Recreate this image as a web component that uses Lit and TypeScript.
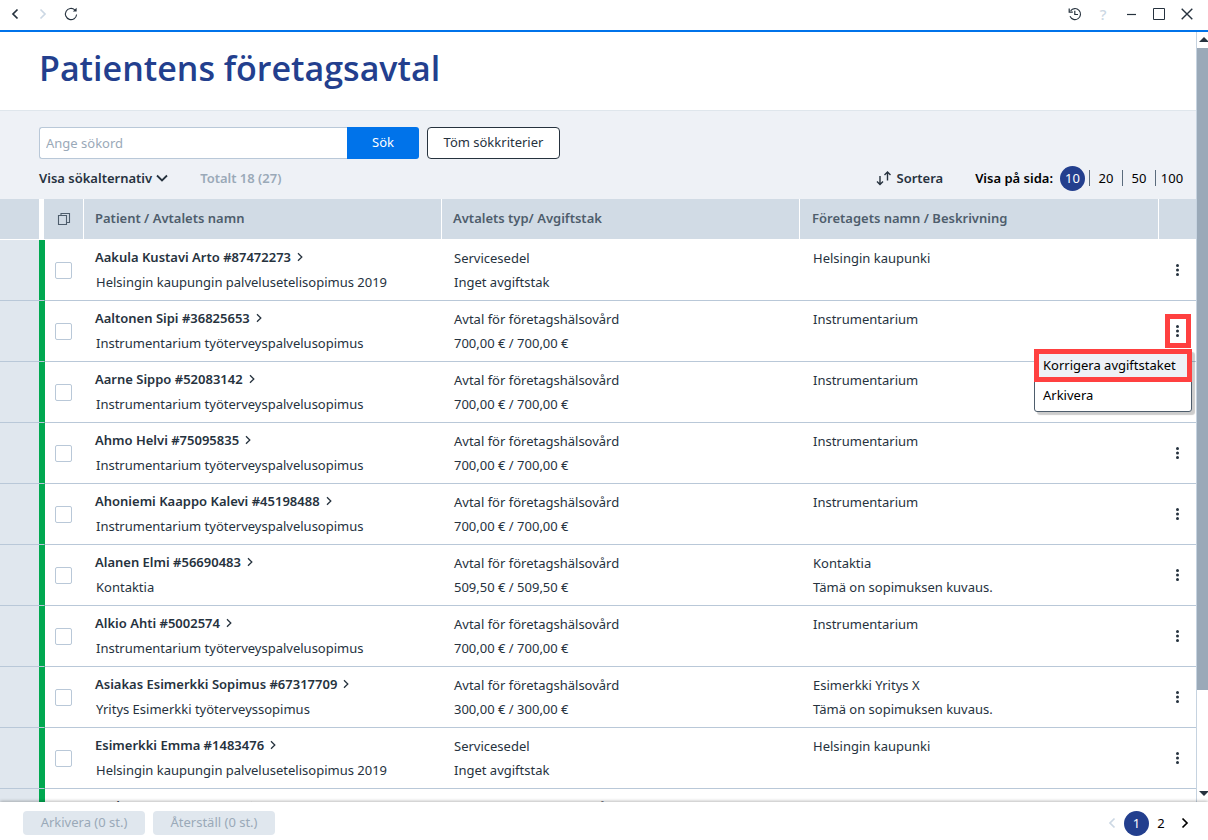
import { LitElement, html, css, svg, nothing } from "lit";
import { customElement } from "lit/decorators.js";

interface Agreement {
  patient: string;
  name: string;
  type: string;
  cap: string;
  company: string;
  description?: string;
  menuOpen?: boolean;
}

const OHC = "Avtal för företagshälsovård";
const INSTR = "Instrumentarium työterveyspalvelusopimus";
const HKI = "Helsingin kaupungin palvelusetelisopimus 2019";
const CAP = "700,00 € / 700,00 €";

const rows: Agreement[] = [
  { patient: "Aakula Kustavi Arto #87472273", name: HKI, type: "Servicesedel", cap: "Inget avgiftstak", company: "Helsingin kaupunki" },
  { patient: "Aaltonen Sipi #36825653", name: INSTR, type: OHC, cap: CAP, company: "Instrumentarium", menuOpen: true },
  { patient: "Aarne Sippo #52083142", name: INSTR, type: OHC, cap: CAP, company: "Instrumentarium" },
  { patient: "Ahmo Helvi #75095835", name: INSTR, type: OHC, cap: CAP, company: "Instrumentarium" },
  { patient: "Ahoniemi Kaappo Kalevi #45198488", name: INSTR, type: OHC, cap: CAP, company: "Instrumentarium" },
  { patient: "Alanen Elmi #56690483", name: "Kontaktia", type: OHC, cap: "509,50 € / 509,50 €", company: "Kontaktia", description: "Tämä on sopimuksen kuvaus." },
  { patient: "Alkio Ahti #5002574", name: INSTR, type: OHC, cap: CAP, company: "Instrumentarium" },
  { patient: "Asiakas Esimerkki Sopimus #67317709", name: "Yritys Esimerkki työterveyssopimus", type: OHC, cap: "300,00 € / 300,00 €", company: "Esimerkki Yritys X", description: "Tämä on sopimuksen kuvaus." },
  { patient: "Esimerkki Emma #1483476", name: HKI, type: "Servicesedel", cap: "Inget avgiftstak", company: "Helsingin kaupunki" },
  { patient: "Potinen Anna #9561935", name: "", type: OHC, cap: "", company: "" },
];

const icon = (w: number, h: number, body: unknown) => html`<svg
  width=${w} height=${h} viewBox="0 0 ${w} ${h}" fill="none" stroke="currentColor" aria-hidden="true">${body}</svg>`;

const backIcon = icon(8, 12, svg`<path d="M6.5 1.5 2 6l4.5 4.5" stroke-width="1.7"/>`);
const forwardIcon = icon(8, 12, svg`<path d="M1.5 1.5 6 6l-4.5 4.500" stroke-width="1.7"/>`);
const reloadIcon = icon(14, 14, svg`<path d="M10.8 2.9A5.6 5.6 0 1 0 12.6 7.5" stroke-width="1.1"/><path d="M8.8 4.4h3.800V.8z" fill="currentColor" stroke="none"/>`);
const historyIcon = icon(14, 14, svg`<path d="M2.6 3.800A5.500 5.500 0 1 1 2 9.300" stroke-width="1.1"/><path d="M1.200 1.600v3.600h3.600" stroke-width="1.2"/><path d="M6.800 3.800v3.700H10" stroke-width="1.2"/>`);
const minIcon = icon(12, 12, svg`<path d="M2 6.500h9" stroke-width="1.2"/>`);
const maxIcon = icon(12, 12, svg`<path d="M.5.5h11v11H.5z"/>`);
const closeIcon = icon(12, 12, svg`<path d="m.7.7 10.6 10.6M11.3.7.7 11.3" stroke-width="1.4"/>`);
const downIcon = icon(12, 8, svg`<path d="m1 1.5 5 5 5-5" stroke-width="1.8"/>`);
const sortIcon = icon(16, 16, svg`<path d="M4 6v8.500M1 11.500l3 3 3-3M11.500 10.500V2M8.500 5l3-3 3 3" stroke-width="1.4"/>`);
const copyIcon = icon(14, 14, svg`<path d="M1.500 3.500h8v9h-8zM4 3.500v-2h8.500v9h-3" stroke-width="1.1"/>`);
const smallChevron = icon(6, 10, svg`<path d="m1 1.3 3.8 3.7L1 8.7" stroke-width="1.3"/>`);
const dotsIcon = html`<svg width="4" height="12" viewBox="0 0 4 12" fill="currentColor" aria-hidden="true"><circle cx="1.5" cy="1.500" r="1.5"/><circle cx="1.5" cy="6" r="1.5"/><circle cx="1.5" cy="10.500" r="1.5"/></svg>`;

@customElement("app-root")
export class AppRoot extends LitElement {
  static styles = css`
    :host {
      display: flex;
      flex-direction: column;
      height: 100vh;
      overflow: hidden;
      font: 13px/24px "Noto Sans", "Open Sans", sans-serif;
      color: #26323e;
      background: #fff;
    }
    * { box-sizing: border-box; }
    button, input { font: inherit; color: inherit; margin: 0; }
    button { padding: 0; border: 0; background: none; display: inline-flex; align-items: center; justify-content: center; white-space: nowrap; }
    svg { display: block; flex: none; }

    .titlebar {
      flex: none;
      display: flex;
      justify-content: space-between;
      height: 32px;
      padding: 0 7px 4px 1px;
      border-bottom: 2px solid #0073ea;
    }
    .tools { display: flex; }
    .tools button { width: 28px; height: 28px; }
    .tools .help { font-size: 15px; font-weight: 500; }
    .faded { color: #ccd8e4; }

    .body { flex: 1; min-height: 0; display: flex; }
    .page { flex: 1; min-width: 0; overflow: hidden; display: flex; flex-direction: column; }
    .heading { flex: none; height: 79px; padding: 10px 39px; border-bottom: 1px solid #dfe6ec; }
    h1 { margin: 0; font: 600 34px/52px "Open Sans", "Noto Sans", sans-serif; color: #233f8e; }

    .search { flex: none; background: #eef1f6; padding: 16px 8px 9px 39px; }
    .searchrow { display: flex; gap: 8px; height: 32px; }
    .box { display: flex; width: 380px; }
    .box input {
      flex: 1; min-width: 0; padding: 0 6px; background: #fff;
      border: 1px solid #b9c8d8; border-right: 0; border-radius: 3px 0 0 3px; outline: 0;
    }
    .box input::placeholder { color: #9aa9b8; opacity: 1; }
    .go { width: 72px; padding-bottom: 2px; background: #0073ea; color: #fff; border-radius: 0 3px 3px 0; }
    .clear { width: 133px; padding-bottom: 2px; background: #fff; border: 1px solid #26323e; border-radius: 4px; }
    .options { display: flex; align-items: center; height: 24px; margin-top: 7px; font-weight: 600; }
    .options button { font-weight: 600; gap: 4px; }
    .total { margin-left: 32px; color: #9aa9b8; }
    .sort { margin-left: auto; }
    .pagesize { display: flex; align-items: center; margin-left: 32px; color: #000; }
    .pagesize button { width: 33px; height: 16px; font-weight: 400; border-left: 1px solid #5a6b7c; color: #000; }
    .pagesize .current, .pages .current {
      width: 25px; height: 25px; border: 0; border-radius: 50%; background: #233f8e; color: #fff;
    }
    .pagesize .current { margin: 0 4px 0 7px; }

    table { width: 100%; table-layout: fixed; border-collapse: separate; border-spacing: 0; }
    th, td { padding: 0; text-align: left; }
    .c-gutter { width: 39px; }
    .c-status { width: 5px; }
    .c-check { width: 40px; }
    .c-action { width: 38px; }
    th { height: 41px; background: #d1dbe5; color: #4e5d6c; font-weight: 600; border-right: 1px solid #fff; border-bottom: 1px solid #fff; }
    th.text { padding: 0 0 2px 11px; }
    th.gutter, th.last, th.company { border-right: 0; }
    th.text.company { padding-left: 12px; }
    th.last { border-left: 1px solid #fff; }
    th.status { background: #fff; }
    .pick { display: flex; width: 100%; justify-content: center; }
    td { height: 61px; border-bottom: 1px solid #b9c8d8; vertical-align: top; }
    td.text { padding: 6px 0 0 12px; }
    td.text.who { padding-top: 5px; }
    .who div + div { margin-top: 1px; }
    td.text.company { padding-left: 13px; }
    td.gutter { background: #e0e7ee; }
    td.status { background: #00a850; }
    td.check { border-left: 1px solid #00a850; padding-right: 2px; vertical-align: middle; }
    td.check label { display: flex; justify-content: center; }
    .check input { appearance: none; width: 17px; height: 17px; border: 1px solid #b9c8d8; border-radius: 2px; background: #fff; }
    .patient {
      display: inline-flex; align-items: center; gap: 6px; margin-left: -1px;
      color: inherit; font-weight: 600; text-decoration: none;
    }
    td div { white-space: nowrap; }
    td.action { position: relative; vertical-align: middle; }
    .action .more { display: flex; width: 26px; height: 34px; margin-left: 7px; }
    .action .marked { border: 5px solid #ff4040; }
    .menu {
      position: absolute; z-index: 2; right: 4px; top: 48px; width: 158px; height: 63px;
      background: #fff; border: 1px solid #4e5d6c; border-radius: 3px; box-shadow: 3px 3px 1px #0003; color: #000;
    }
    .menu button { display: flex; justify-content: flex-start; width: 100%; height: 28px; padding-left: 8px; }
    .menu .first { width: 158px; height: 33px; margin: -1px; padding: 0 0 1px 4px; border: 5px solid #ff4040; background: #eef1f6; }

    .scrollbar {
      flex: none; width: 12px; border-left: 1px solid #c6d3e0; background: #fff;
      display: flex; flex-direction: column; overflow: hidden; color: #26323e;
    }
    .arrow { height: 16px; padding: 5px 0 0 2px; }
    .thumb { height: 642px; background: #9aa9b8; margin-bottom: auto; }

    .footer {
      flex: none; position: relative; display: flex; align-items: center; gap: 8px;
      height: 38px; padding: 4px 11px 0 23px; background: #fff; box-shadow: 0 -1px 3px #0004;
    }
    .footer .bulk { width: 122px; height: 24px; padding-bottom: 2px; border-radius: 4px; background: #e0e7ee; color: #9aa9b8; }
    .pages { display: flex; align-items: center; margin-left: auto; color: #000; }
    .pages button { width: 24px; height: 24px; }
    .pages .current { padding-bottom: 1px; }
  `;

  private row(r: Agreement) {
    return html`<tr>
      <td class="gutter"></td>
      <td class="status"></td>
      <td class="check"><label><input type="checkbox" aria-label=${r.patient} /></label></td>
      <td class="text who">
        <div><a class="patient" href="#">${r.patient}${smallChevron}</a></div>
        <div>${r.name}</div>
      </td>
      <td class="text"><div>${r.type}</div><div>${r.cap}</div></td>
      <td class="text company"><div>${r.company}</div><div>${r.description ?? nothing}</div></td>
      <td class="action">
        <button class="more ${r.menuOpen ? "marked" : ""}" aria-label="Mer">${dotsIcon}</button>
        ${r.menuOpen
          ? html`<div class="menu" role="menu">
              <button class="first" role="menuitem">Korrigera avgiftstaket</button>
              <button role="menuitem">Arkivera</button>
            </div>`
          : nothing}
      </td>
    </tr>`;
  }

  render() {
    return html`
      <header class="titlebar">
        <div class="tools">
          <button aria-label="Bakåt">${backIcon}</button>
          <button class="faded" aria-label="Framåt">${forwardIcon}</button>
          <button aria-label="Ladda om">${reloadIcon}</button>
        </div>
        <div class="tools">
          <button aria-label="Historik">${historyIcon}</button>
          <button class="faded help">?</button>
          <button aria-label="Minimera">${minIcon}</button>
          <button aria-label="Maximera">${maxIcon}</button>
          <button aria-label="Stäng">${closeIcon}</button>
        </div>
      </header>
      <div class="body">
        <main class="page">
          <div class="heading"><h1>Patientens företagsavtal</h1></div>
          <section class="search">
            <div class="searchrow">
              <div class="box">
                <input type="text" placeholder="Ange sökord" aria-label="Ange sökord" />
                <button class="go">Sök</button>
              </div>
              <button class="clear">Töm sökkriterier</button>
            </div>
            <div class="options">
              <button>Visa sökalternativ ${downIcon}</button>
              <span class="total">Totalt 18 (27)</span>
              <button class="sort">${sortIcon}Sortera</button>
              <div class="pagesize">
                <span>Visa på sida:</span>
                <button class="current">10</button>
                <button>20</button><button>50</button><button>100</button>
              </div>
            </div>
          </section>
          <table>
            <colgroup>
              <col class="c-gutter" /><col class="c-status" /><col class="c-check" />
              <col /><col /><col /><col class="c-action" />
            </colgroup>
            <thead>
              <tr>
                <th class="gutter"></th>
                <th class="status"></th>
                <th><button class="pick" aria-label="Markera alla">${copyIcon}</button></th>
                <th class="text">Patient / Avtalets namn</th>
                <th class="text">Avtalets typ/ Avgiftstak</th>
                <th class="text company">Företagets namn / Beskrivning</th>
                <th class="last"></th>
              </tr>
            </thead>
            <tbody>${rows.map((r) => this.row(r))}</tbody>
          </table>
        </main>
        <div class="scrollbar" aria-hidden="true">
          <div class="arrow"><svg width="10" height="5" viewBox="0 0 10 5" fill="currentColor"><path d="M0 5 5 0l5 5z"/></svg></div>
          <div class="thumb"></div>
          <div class="arrow"><svg width="10" height="5" viewBox="0 0 10 5" fill="currentColor"><path d="m0 0 5 5 5-5z"/></svg></div>
        </div>
      </div>
      <footer class="footer">
        <button class="bulk" disabled>Arkivera (0 st.)</button>
        <button class="bulk" disabled>Återställ (0 st.)</button>
        <nav class="pages">
          <button class="faded" aria-label="Föregående">${backIcon}</button>
          <button class="current">1</button>
          <button>2</button>
          <button aria-label="Nästa">${forwardIcon}</button>
        </nav>
      </footer>
    `;
  }
}
